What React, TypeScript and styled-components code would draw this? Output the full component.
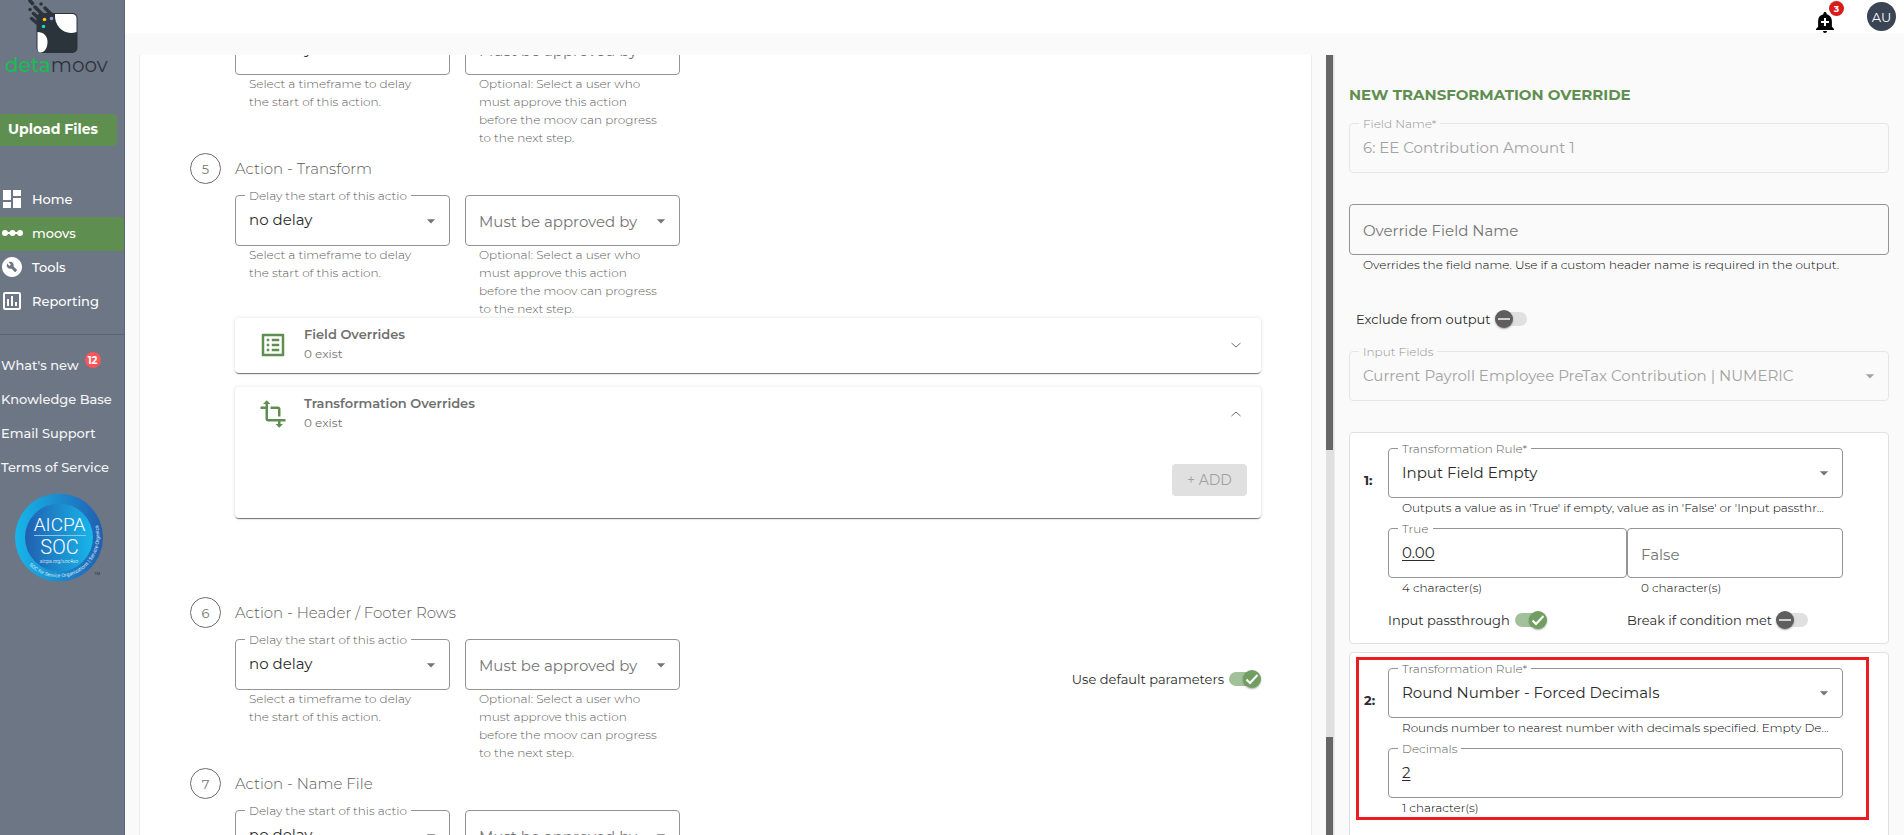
import { useId, useLayoutEffect, useRef, useState } from "react";
import type { ReactNode } from "react";
import styled, { createGlobalStyle, css } from "styled-components";
import {
  MdAddAlert,
  MdArrowDropDown,
  MdBuildCircle,
  MdDashboard,
  MdOutlineAssessment,
  MdOutlineListAlt,
  MdTransform,
} from "react-icons/md";

const color = {
  green: "#5f8f50",
  slate: "#6d7685",
  page: "#fafafa",
  muted: "#757575",
  light: "#5a5a5a",
  ink: "#2b2b2b",
  outline: "#949494",
  faint: "#e6e6e6",
};

const GlobalStyle = createGlobalStyle`
  *, *::before, *::after { box-sizing: border-box; }
  body {
    margin: 0;
    background: ${color.page};
    color: ${color.ink};
    font-family: Montserrat, Inter, "Liberation Sans", sans-serif;
    font-size: 13px;
  }
  button, input, select { font: inherit; color: inherit; }
`;

/* ---------- shell ---------- */

const Shell = styled.div`
  display: flex;
  height: 100vh;
  overflow: hidden;
`;

const Sidebar = styled.aside`
  display: flex;
  flex-direction: column;
  flex: none;
  width: 125px;
  background: ${color.slate};
  border-right: 1px solid #5c6473;
  color: #fff;
`;

const Brand = styled.a`
  display: flex;
  flex-direction: column;
  height: 114px;
  padding-left: 5px;
  color: #2b343b;
  text-decoration: none;
`;

const BrandMark = styled.svg`
  display: block;
  flex: none;
  width: 55px;
  height: 54px;
  margin-left: 23px;
`;

const BrandName = styled.span`
  font-size: 20px;
  line-height: 22px;
  font-weight: 400;

  b {
    color: #12bf4f;
    font-weight: 500;
  }
`;

const UploadButton = styled.button`
  width: 117px;
  height: 32px;
  padding: 0 0 2px 8px;
  border: 0;
  border-radius: 0 4px 4px 0;
  background: ${color.green};
  color: #fff;
  font-size: 14px;
  font-weight: 700;
  text-align: left;
  white-space: nowrap;
`;

const Nav = styled.nav`
  display: flex;
  flex-direction: column;
  margin-top: 37px;
  padding-bottom: 15px;
  border-bottom: 1px solid #5c6473;
`;

const NavItem = styled.a<{ $active?: boolean }>`
  display: flex;
  align-items: center;
  gap: 8px;
  height: 34px;
  padding-bottom: 2px;
  border-radius: 0 3px 3px 0;
  background: ${(p) => (p.$active ? color.green : "transparent")};
  color: #fff;
  font-weight: 500;
  line-height: 18px;
  text-decoration: none;

  svg {
    flex: none;
    width: 24px;
    height: 24px;
  }
`;

const Links = styled.nav`
  display: flex;
  flex-direction: column;
  margin-top: 13px;
`;

const LinkItem = styled.a`
  display: flex;
  align-items: center;
  gap: 6px;
  height: 34px;
  padding-left: 1px;
  color: #f4f5f6;
  font-weight: 500;
  text-decoration: none;
  white-space: nowrap;
`;

const NewsCount = styled.span`
  display: grid;
  place-items: center;
  width: 16px;
  height: 16px;
  margin-bottom: 10px;
  border-radius: 50%;
  background: #fb5559;
  color: #fff;
  font-size: 10px;
  font-weight: 700;
`;

const Seal = styled.svg`
  display: block;
  width: 90px;
  height: 90px;
  margin: 9px 0 0 14px;
`;

const Content = styled.div`
  display: flex;
  flex: 1;
  flex-direction: column;
  min-width: 0;
`;

const TopBar = styled.header`
  display: flex;
  flex: none;
  align-items: center;
  justify-content: flex-end;
  gap: 30px;
  height: 33px;
  padding-right: 8px;
  background: #fff;
`;

const BellButton = styled.button`
  position: relative;
  display: block;
  height: 24px;
  margin-top: 10px;
  padding: 0;
  border: 0;
  background: none;
  color: #000;

  svg {
    display: block;
    width: 24px;
    height: 24px;
  }
`;

const BellCount = styled.span`
  position: absolute;
  top: -9px;
  right: -7px;
  display: grid;
  place-items: center;
  width: 15px;
  height: 15px;
  border-radius: 50%;
  background: #d81b1b;
  color: #fff;
  font-size: 9px;
  font-weight: 700;
`;

const Avatar = styled.button`
  width: 29px;
  height: 29px;
  padding: 0;
  border: 0;
  border-radius: 50%;
  background: #3b4455;
  color: #fff;
`;

const Workspace = styled.main`
  display: grid;
  flex: 1;
  grid-template-columns: minmax(0, 1173fr) 9px minmax(0, 540fr);
  gap: 14px;
  min-height: 0;
  padding: 22px 15px 0 14px;
`;

const Rail = styled.div`
  display: flex;
  flex-direction: column;
  background: #e0e0e0;
  border-right: 1px solid #ececec;
`;

const RailPart = styled.div<{ $share: number; $thumb?: boolean }>`
  flex: ${(p) => p.$share} 0 0;
  width: 7px;
  background: ${(p) => (p.$thumb ? "#666" : "transparent")};
`;

/* ---------- form controls ---------- */

type Tone = "normal" | "disabled";

const FieldRoot = styled.div`
  min-width: 0;
`;

const Outline = styled.div<{ $tone: Tone; $tall?: boolean }>`
  position: relative;
  display: flex;
  align-items: center;
  height: ${(p) => (p.$tall ? 51 : 50)}px;
  border: 1px solid ${(p) => (p.$tone === "disabled" ? color.faint : color.outline)};
  border-radius: 4px;
  color: ${(p) => (p.$tone === "disabled" ? "#a3a3a3" : color.ink)};

  > svg {
    position: absolute;
    right: 8px;
    width: 20px;
    height: 20px;
    color: ${(p) => (p.$tone === "disabled" ? "#a3a3a3" : "#757575")};
    pointer-events: none;
  }
`;

const FloatingLabel = styled.label<{ $surface: string; $tone: Tone }>`
  position: absolute;
  top: -8px;
  left: 9px;
  padding: 0 4px;
  background: ${(p) => p.$surface};
  color: ${(p) => (p.$tone === "disabled" ? "#929292" : color.light)};
  font-size: 12px;
  font-weight: 300;
  line-height: 15px;
  white-space: nowrap;
`;

const controlStyle = css<{ $empty?: boolean }>`
  width: 100%;
  height: 100%;
  padding: ${(p) => (p.$empty ? "2px 13px 0" : "0 13px 2px")};
  border: 0;
  outline: 0;
  background: transparent;
  color: ${(p) => (p.$empty ? color.muted : "inherit")};
  font-size: 15px;
  opacity: 1;

  &::placeholder {
    color: ${color.muted};
    opacity: 1;
  }
`;

const SelectControl = styled.select<{ $empty?: boolean }>`
  ${controlStyle}
  appearance: none;
`;

const TextControl = styled.input<{ $empty?: boolean; $underline?: boolean }>`
  ${controlStyle}
  text-decoration: ${(p) => (p.$underline ? "underline" : "none")};
  text-underline-offset: 2px;
`;

const Hint = styled.p<{ $wrap?: boolean }>`
  margin: 0;
  padding: 0 14px;
  color: ${(p) => (p.$wrap ? color.light : "#000")};
  font-size: 12px;
  font-weight: 300;
  line-height: ${(p) => (p.$wrap ? 18 : 20)}px;
  white-space: ${(p) => (p.$wrap ? "pre-line" : "nowrap")};
`;

type FieldProps = {
  label: string;
  value?: string;
  hint?: string;
  wrapHint?: boolean;
  tall?: boolean;
  surface?: string;
  disabled?: boolean;
  underline?: boolean;
};

function SelectField({ label, value, hint, wrapHint, tall, surface = "#fff", disabled }: FieldProps) {
  const id = useId();
  const tone: Tone = disabled ? "disabled" : "normal";
  return (
    <FieldRoot>
      <Outline $tone={tone} $tall={tall}>
        <SelectControl id={id} disabled={disabled} $empty={!value} aria-label={value ? undefined : label}>
          <option>{value ?? label}</option>
        </SelectControl>
        {value && (
          <FloatingLabel htmlFor={id} $surface={surface} $tone={tone}>
            {label}
          </FloatingLabel>
        )}
        <MdArrowDropDown />
      </Outline>
      {hint && <Hint $wrap={wrapHint}>{hint}</Hint>}
    </FieldRoot>
  );
}

function TextField({ label, value, hint, tall, surface = "#fff", disabled, underline }: FieldProps) {
  const id = useId();
  const tone: Tone = disabled ? "disabled" : "normal";
  return (
    <FieldRoot>
      <Outline $tone={tone} $tall={tall}>
        <TextControl
          id={id}
          type="text"
          disabled={disabled}
          defaultValue={value}
          placeholder={value ? undefined : label}
          aria-label={value ? undefined : label}
          $empty={!value}
          $underline={underline}
        />
        {value && (
          <FloatingLabel htmlFor={id} $surface={surface} $tone={tone}>
            {label}
          </FloatingLabel>
        )}
      </Outline>
      {hint && <Hint>{hint}</Hint>}
    </FieldRoot>
  );
}

const ToggleRow = styled.label`
  display: inline-flex;
  align-items: center;
  gap: 4px;
  height: 18px;
  line-height: 18px;
  white-space: nowrap;
`;

const Track = styled.span<{ $on: boolean }>`
  position: relative;
  display: flex;
  align-items: center;
  justify-content: ${(p) => (p.$on ? "flex-end" : "flex-start")};
  width: 33px;
  height: 18px;

  &::before {
    content: "";
    position: absolute;
    inset: 2px 1px 2px 1px;
    border-radius: 7px;
    background: ${(p) => (p.$on ? "#a3c198" : "#e0e0e0")};
  }

  input {
    position: absolute;
    inset: 0;
    z-index: 2;
    width: 100%;
    height: 100%;
    margin: 0;
    opacity: 0;
  }
`;

const Knob = styled.span<{ $on: boolean }>`
  position: relative;
  width: 18px;
  height: 18px;
  border-radius: 50%;
  background: ${(p) => (p.$on ? "#719f61" : "#5e5e5e")};
  box-shadow: 0 1px 2px rgba(0, 0, 0, 0.35);

  svg {
    display: block;
    width: 18px;
    height: 18px;
    fill: none;
    stroke: ${(p) => (p.$on ? "#fff" : "#cfcfcf")};
    stroke-width: 2;
  }
`;

function Toggle({ label, initial = false }: { label: string; initial?: boolean }) {
  const [on, setOn] = useState(initial);
  return (
    <ToggleRow>
      {label}
      <Track $on={on}>
        <Knob $on={on}>
          <svg viewBox="0 0 18 18">{on ? <path d="M3.5 9.5l3.5 3.5 7.5-8" /> : <path d="M3 9h12" />}</svg>
        </Knob>
        <input type="checkbox" role="switch" checked={on} onChange={() => setOn(!on)} />
      </Track>
    </ToggleRow>
  );
}

/* ---------- action steps ---------- */

const StepsCard = styled.section`
  height: 100%;
  padding: 0 50px;
  overflow: auto;
  scrollbar-width: none;
  background: #fff;
  border: 1px solid #ececec;
  border-width: 0 1px;
`;

const StepRow = styled.article`
  display: grid;
  grid-template-columns: 31px minmax(0, 1fr);
  gap: 11px 14px;
  padding-bottom: 6px;
`;

const StepNumber = styled.span`
  display: grid;
  place-items: center;
  width: 31px;
  height: 31px;
  border: 1px solid #6e6e6e;
  border-radius: 50%;
  color: ${color.muted};
`;

const StepTitle = styled.h2`
  align-self: center;
  margin: 0;
  color: ${color.light};
  font-size: 15px;
  font-weight: 300;
`;

const StepBody = styled.div`
  grid-column: 2;
`;

const StepFields = styled.div`
  display: flex;
  justify-content: space-between;
`;

const FieldPair = styled.div`
  display: grid;
  grid-template-columns: 215px 215px;
  gap: 15px;
`;

const StepOption = styled.div`
  padding-top: 31px;
`;

const PanelStack = styled.div`
  display: flex;
  flex-direction: column;
  gap: 14px;
  padding-bottom: 73px;
`;

const Panel = styled.section`
  border-radius: 4px;
  background: #fff;
  box-shadow: 0 2px 1px -1px rgba(0, 0, 0, 0.4), 0 1px 1px rgba(0, 0, 0, 0.2), 0 0 4px rgba(0, 0, 0, 0.12);
`;

const PanelHead = styled.button`
  display: flex;
  align-items: center;
  width: 100%;
  height: 55px;
  padding: 0 16px 2px 23px;
  border: 0;
  background: none;
  text-align: left;

  > svg:first-child {
    flex: none;
    width: 30px;
    height: 30px;
    color: ${color.green};
  }
`;

const PanelText = styled.span`
  display: grid;
  flex: 1;
  gap: 3px;
  padding-left: 16px;
  padding-bottom: 2px;
  color: ${color.muted};
  font-size: 12px;
  line-height: 16px;

  strong {
    color: #6f6f6f;
    font-size: 13px;
    font-weight: 600;
    line-height: 18px;
  }
`;

const Chevron = styled.svg<{ $open?: boolean }>`
  width: 18px;
  height: 10px;
  fill: none;
  stroke: #6e6e6e;
  transform: ${(p) => (p.$open ? "rotate(180deg)" : "none")};
`;

const PanelActions = styled.div`
  display: flex;
  justify-content: flex-end;
  padding: 22px 14px;
`;

const AddButton = styled.button`
  width: 75px;
  height: 32px;
  padding: 0;
  border: 0;
  border-radius: 4px;
  background: #e0e0e0;
  color: #a0a0a0;
  font-size: 14px;
`;

type StepProps = { n: number; title: string; option?: ReactNode; children?: ReactNode };

function Step({ n, title, option, children }: StepProps) {
  return (
    <StepRow>
      <StepNumber>{n}</StepNumber>
      <StepTitle>Action - {title}</StepTitle>
      <StepBody>
        <StepFields>
          <FieldPair>
            <SelectField
              label="Delay the start of this actio"
              value="no delay"
              tall
              wrapHint
              hint={"Select a timeframe to delay\nthe start of this action."}
            />
            <SelectField
              label="Must be approved by"
              tall
              wrapHint
              hint={"Optional: Select a user who\nmust approve this action\nbefore the moov can progress\nto the next step."}
            />
          </FieldPair>
          {option && <StepOption>{option}</StepOption>}
        </StepFields>
        {children}
      </StepBody>
    </StepRow>
  );
}

function OverridePanel(props: { icon: ReactNode; title: string; children?: ReactNode }) {
  const open = Boolean(props.children);
  return (
    <Panel>
      <PanelHead type="button" aria-expanded={open}>
        {props.icon}
        <PanelText>
          <strong>{props.title}</strong>
          0 exist
        </PanelText>
        <Chevron viewBox="0 0 18 10" $open={open}>
          <path d="M4.500 3l4.500 4 4.500-4" />
        </Chevron>
      </PanelHead>
      {props.children}
    </Panel>
  );
}

/* ---------- override editor ---------- */

const Editor = styled.section`
  display: flex;
  flex-direction: column;
  min-height: 0;
  padding-top: 30px;
  overflow: hidden;

  > * {
    flex: none;
  }
`;

const EditorTitle = styled.h1`
  margin: 0 0 18px;
  color: ${color.green};
  font-size: 15px;
  font-weight: 700;
  line-height: 20px;
`;

const EditorFields = styled.div`
  display: grid;
  gap: 31px;
`;

const EditorToggle = styled.div`
  display: flex;
  padding: 35px 0 23px 7px;
`;

const RuleList = styled.div`
  display: grid;
  gap: 8px;
  margin-top: 31px;
`;

const RuleCard = styled.article`
  position: relative;
  display: grid;
  grid-template-columns: 24px minmax(0, 1fr);
  align-items: start;
  min-height: 212px;
  padding: 15px 45px 14px 14px;
  border: 1px solid #e0e0e0;
  border-radius: 4px;
  background: #fff;
`;

const RuleNumber = styled.strong`
  padding-top: 23px;
  line-height: 18px;
`;

const RuleForm = styled.div`
  display: grid;
  gap: 10px;
`;

const Split = styled.div`
  display: grid;
  grid-template-columns: 239fr 216fr;
`;

const RuleToggles = styled(Split)`
  padding-top: 3px;
`;

const Highlight = styled.div`
  position: absolute;
  top: 4px;
  right: 19px;
  left: 6px;
  height: 163px;
  border: 3px solid #ed1c24;
  pointer-events: none;
`;

function Logo() {
  return (
    <BrandMark viewBox="0 0 55 54" aria-hidden="true">
      <rect x="8.500" y="13" width="41" height="40" rx="5" fill="#2b343b" />
      <path d="M27 14h17q4.500 0 4.500 4.500v13.500C37 36 26 27 27 14z" fill="#fff" />
      <path d="M9.500 32c6 0 10 4 10 10s-3 10.500-7 10.500q-3 0-3-4z" fill="#fff" />
      <g stroke="#2b343b" strokeWidth="3.500" strokeLinecap="round">
        <path d="M1.500 0l3 3.500M7 7l13 13M2 9.500h.1M5.500 13.500L16 23.500M13 4h.1M17 8l8 8M3.500 18.500L15 28" />
      </g>
      <circle cx="16.500" cy="19.500" r="1.800" fill="#f5c518" />
      <circle cx="23.500" cy="18.500" r="1.800" fill="#8e93e8" />
      <circle cx="15.500" cy="26.500" r="1.800" fill="#16d6c8" />
    </BrandMark>
  );
}

function ChainIcon() {
  return (
    <svg viewBox="0 0 24 24" fill="currentColor" aria-hidden="true">
      <path d="M4 11h17v2H4z" />
      <circle cx="5" cy="12" r="3" />
      <circle cx="12.500" cy="12" r="3" />
      <circle cx="20" cy="12" r="3" />
    </svg>
  );
}

function SocSeal() {
  return (
    <Seal viewBox="0 0 90 90" role="img" aria-label="AICPA SOC">
      <defs>
        <linearGradient id="ring">
          <stop offset="0" stopColor="#17b6ea" />
          <stop offset="1" stopColor="#215fb0" />
        </linearGradient>
        <linearGradient id="disc">
          <stop offset="0" stopColor="#215fb0" />
          <stop offset="1" stopColor="#17b6ea" />
        </linearGradient>
        <path id="rim" d="M15 72A41 41 0 0 0 84 33" />
      </defs>
      <circle cx="45" cy="44.500" r="44" fill="url(#ring)" />
      <circle cx="45" cy="44.500" r="34" fill="url(#disc)" />
      <g fill="#fff" textAnchor="middle" fontFamily="Roboto, sans-serif" fontWeight="300">
        <text x="45.500" y="38" fontSize="19">AICPA</text>
        <text x="45.500" y="61" fontSize="20">SOC</text>
        <text x="45" y="70" fontSize="5">aicpa.org/soc4so</text>
      </g>
      <path d="M20 42.500h52" stroke="#8fc3ea" />
      <text fontSize="5" fill="#d6ecfa" fontFamily="Roboto, sans-serif">
        <textPath href="#rim">SOC for Service Organizations | Service Organizations</textPath>
      </text>
      <text x="80" y="82" fontSize="4" fill="#2b343b" fontFamily="Roboto, sans-serif">TM</text>
    </Seal>
  );
}

export default function App() {
  const steps = useRef<HTMLElement>(null);

  // Open with the transform step in view, the step above it partly scrolled off.
  useLayoutEffect(() => {
    if (steps.current) steps.current.scrollTop = 73;
  }, []);

  return (
    <>
      <GlobalStyle />
      <Shell>
        <Sidebar>
          <Brand href="#">
            <Logo />
            <BrandName>
              <b>deta</b>moov
            </BrandName>
          </Brand>
          <UploadButton type="button">Upload Files</UploadButton>
          <Nav>
            <NavItem href="#"><MdDashboard />Home</NavItem>
            <NavItem href="#" $active><ChainIcon />moovs</NavItem>
            <NavItem href="#"><MdBuildCircle />Tools</NavItem>
            <NavItem href="#"><MdOutlineAssessment />Reporting</NavItem>
          </Nav>
          <Links>
            <LinkItem href="#">What's new <NewsCount>12</NewsCount></LinkItem>
            <LinkItem href="#">Knowledge Base</LinkItem>
            <LinkItem href="#">Email Support</LinkItem>
            <LinkItem href="#">Terms of Service</LinkItem>
          </Links>
          <SocSeal />
        </Sidebar>

        <Content>
          <TopBar>
            <BellButton type="button" aria-label="Notifications">
              <MdAddAlert />
              <BellCount>3</BellCount>
            </BellButton>
            <Avatar type="button">AU</Avatar>
          </TopBar>

          <Workspace>
            <StepsCard ref={steps}>
              <Step n={4} title="Import" />
              <Step n={5} title="Transform">
                <PanelStack>
                  <OverridePanel icon={<MdOutlineListAlt />} title="Field Overrides" />
                  <OverridePanel icon={<MdTransform />} title="Transformation Overrides">
                    <PanelActions>
                      <AddButton type="button" disabled>+ ADD</AddButton>
                    </PanelActions>
                  </OverridePanel>
                </PanelStack>
              </Step>
              <Step n={6} title="Header / Footer Rows" option={<Toggle label="Use default parameters" initial />} />
              <Step n={7} title="Name File" />
            </StepsCard>

            <Rail>
              <RailPart $share={395} $thumb />
              <RailPart $share={287} />
              <RailPart $share={98} $thumb />
            </Rail>

            <Editor>
              <EditorTitle>NEW TRANSFORMATION OVERRIDE</EditorTitle>
              <EditorFields>
                <TextField label="Field Name*" value="6: EE Contribution Amount 1" surface={color.page} disabled />
                <TextField
                  label="Override Field Name"
                  tall
                  hint="Overrides the field name. Use if a custom header name is required in the output."
                />
              </EditorFields>
              <EditorToggle>
                <Toggle label="Exclude from output" />
              </EditorToggle>
              <SelectField
                label="Input Fields"
                value="Current Payroll Employee PreTax Contribution | NUMERIC"
                surface={color.page}
                disabled
              />
              <RuleList>
                <RuleCard>
                  <RuleNumber>1:</RuleNumber>
                  <RuleForm>
                    <SelectField
                      label="Transformation Rule*"
                      value="Input Field Empty"
                      hint="Outputs a value as in 'True' if empty, value as in 'False' or 'Input passthr..."
                    />
                    <Split>
                      <TextField label="True" value="0.00" hint="4 character(s)" underline />
                      <TextField label="False" hint="0 character(s)" />
                    </Split>
                    <RuleToggles>
                      <Toggle label="Input passthrough" initial />
                      <Toggle label="Break if condition met" />
                    </RuleToggles>
                  </RuleForm>
                </RuleCard>
                <RuleCard>
                  <RuleNumber>2:</RuleNumber>
                  <RuleForm>
                    <SelectField
                      label="Transformation Rule*"
                      value="Round Number - Forced Decimals"
                      hint="Rounds number to nearest number with decimals specified. Empty De..."
                    />
                    <TextField label="Decimals" value="2" hint="1 character(s)" underline />
                  </RuleForm>
                  <Highlight />
                </RuleCard>
              </RuleList>
            </Editor>
          </Workspace>
        </Content>
      </Shell>
    </>
  );
}
